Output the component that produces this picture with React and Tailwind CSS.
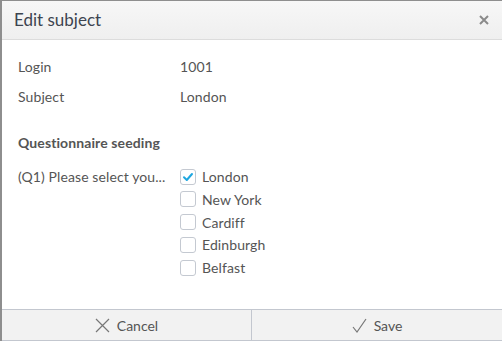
import React from "react";

const cities = ["London", "New York", "Cardiff", "Edinburgh", "Belfast"];

function Check({ checked }) {
  return (
    <span className="flex h-[16px] w-[16px] items-center justify-center rounded-[3px] border border-[#c4c9d1] bg-white">
      {checked && (
        <svg width="12" height="12" viewBox="0 0 12 12">
          <path d="M2 6.3 L4.8 9 L10 3" fill="none" stroke="#1ea7e0" strokeWidth="2" strokeLinecap="round" strokeLinejoin="round" />
        </svg>
      )}
    </span>
  );
}

export default function App() {
  return (
    <div
      className="flex h-[341px] w-[502px] flex-col border-l-2 border-t border-[#8e8e8e] bg-white text-[14px] tracking-[0.1px] text-[#555]"
      style={{ fontFamily: "Lato, 'Open Sans', sans-serif" }}
    >
      <div className="flex h-[39px] items-center justify-between border-b border-[#dcdcdc] bg-gradient-to-b from-[#f7f7f7] to-[#efefef] pl-[12px] pr-[12px]">
        <span className="text-[17px] tracking-normal text-[#3d4450]">Edit subject</span>
        <svg width="10" height="10" viewBox="0 0 10 10" className="mr-[1px]">
          <path d="M1 1 L9 9 M9 1 L1 9" stroke="#8a8a8a" strokeWidth="2" />
        </svg>
      </div>
      <div className="flex-1 pl-[16px] pt-[17px]">
        <div className="grid grid-cols-[162px_1fr] gap-y-[11px]">
          <span className="leading-[19px]">Login</span>
          <span className="leading-[19px]">1001</span>
          <span className="leading-[19px]">Subject</span>
          <span className="leading-[19px]">London</span>
        </div>
        <div className="mt-[27px] font-bold leading-[19px] text-[#555]">Questionnaire seeding</div>
        <div className="mt-[15px] grid grid-cols-[162px_1fr]">
          <span className="leading-[19px]">(Q1) Please select you...</span>
          <div className="flex flex-col gap-[3.75px]">
            {cities.map((c, i) => (
              <div key={c} className="flex h-[19px] items-center gap-[6px]">
                <Check checked={i === 0} />
                <span>{c}</span>
              </div>
            ))}
          </div>
        </div>
      </div>
      <div className="grid h-[32px] grid-cols-2 border-t border-b border-[#c3c7cf] bg-[#f2f2f2] text-[14px] tracking-normal text-[#555]">
        <button className="flex items-center justify-center gap-[7px] border-r border-[#c3c7cf]">
          <svg width="15" height="15" viewBox="0 0 15 15">
            <path d="M1 1 L14 14 M14 1 L1 14" stroke="#777" strokeWidth="1.2" />
          </svg>
          <span>Cancel</span>
        </button>
        <button className="flex items-center justify-center gap-[7px]">
          <svg width="15" height="15" viewBox="0 0 15 15">
            <path d="M1 9 L5 14 L14 1" fill="none" stroke="#777" strokeWidth="1.2" />
          </svg>
          <span>Save</span>
        </button>
      </div>
    </div>
  );
}
